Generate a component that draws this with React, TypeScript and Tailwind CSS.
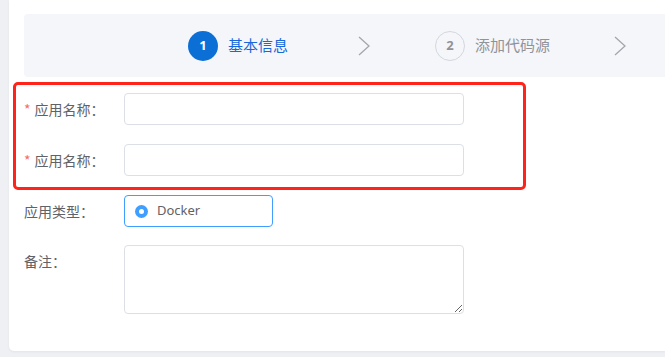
import React from 'react';

const cjk = { fontFamily: '"Noto Sans CJK SC", "Noto Sans", sans-serif' };

function Chevron() {
  return (
    <svg className="w-[14px] h-[20px] text-[#a3a6ad]" viewBox="0 0 14 20" fill="none" stroke="currentColor" strokeWidth={1.3}>
      <polyline points="2,1 12,10 2,19" />
    </svg>
  );
}

function Label({ text, required }: { text: string; required?: boolean }) {
  return (
    <div className="w-[100px] shrink-0 h-[32px] flex items-center text-[14px] text-[#606266]">
      {required && <span className="text-[#f56c6c] mr-[4px] text-[14px]">*</span>}
      <span>{text}：</span>
    </div>
  );
}

export default function App() {
  return (
    <div className="h-[357px] bg-[#eff0f4] pl-[9px] overflow-hidden" style={cjk}>
      <div className="h-[351px] bg-white rounded-bl-[5px] shadow-[0_1px_3px_rgba(0,0,0,0.05)] pt-[14px] pl-[15px]">
        <div className="h-[63px] bg-[#f5f6fa] rounded-l-[4px] flex items-center pl-[164px]">
          <div className="flex items-center">
            <div className="w-[30px] h-[30px] rounded-full bg-[#0b6fd6] text-white text-[13px] font-bold flex items-center justify-center" style={{ fontFamily: '"Open Sans", sans-serif' }}>
              1
            </div>
            <span className="ml-[10px] text-[15px] text-[#1768d8]">基本信息</span>
          </div>
          <div className="ml-[69px]">
            <Chevron />
          </div>
          <div className="flex items-center ml-[64px]">
            <div className="w-[30px] h-[30px] rounded-full border border-[#d3d6dd] text-[#909399] text-[13px] font-bold flex items-center justify-center" style={{ fontFamily: '"Open Sans", sans-serif' }}>
              2
            </div>
            <span className="ml-[10px] text-[15px] text-[#909399]">添加代码源</span>
          </div>
          <div className="ml-[63px]">
            <Chevron />
          </div>
        </div>

        <div className="ml-[-11px] mt-[5px] w-[513px] border-[3px] border-[#ff2319] rounded-[5px] pt-[8px] pb-[11px] pl-[8px] flex flex-col gap-[19px]">
          <div className="flex">
            <Label text="应用名称" required />
            <input className="w-[340px] h-[32px] border border-[#dcdfe6] rounded-[4px] outline-none px-[12px]" />
          </div>
          <div className="flex">
            <Label text="应用名称" required />
            <input className="w-[340px] h-[32px] border border-[#dcdfe6] rounded-[4px] outline-none px-[12px]" />
          </div>
        </div>

        <div className="mt-[5px] flex">
          <Label text="应用类型" />
          <div className="w-[149px] h-[32px] border border-[#409eff] rounded-[4px] flex items-center pl-[10px]">
            <span className="w-[13px] h-[13px] rounded-full bg-[#409eff] flex items-center justify-center">
              <span className="w-[5px] h-[5px] rounded-full bg-white" />
            </span>
            <span className="ml-[9px] text-[13px] text-[#606266]" style={{ fontFamily: '"Noto Sans", sans-serif' }}>Docker</span>
          </div>
        </div>

        <div className="mt-[18px] flex">
          <Label text="备注" />
          <textarea className="w-[340px] h-[69px] border border-[#dcdfe6] rounded-[4px] outline-none px-[12px] py-[5px] text-[14px]" />
        </div>
      </div>
    </div>
  );
}
